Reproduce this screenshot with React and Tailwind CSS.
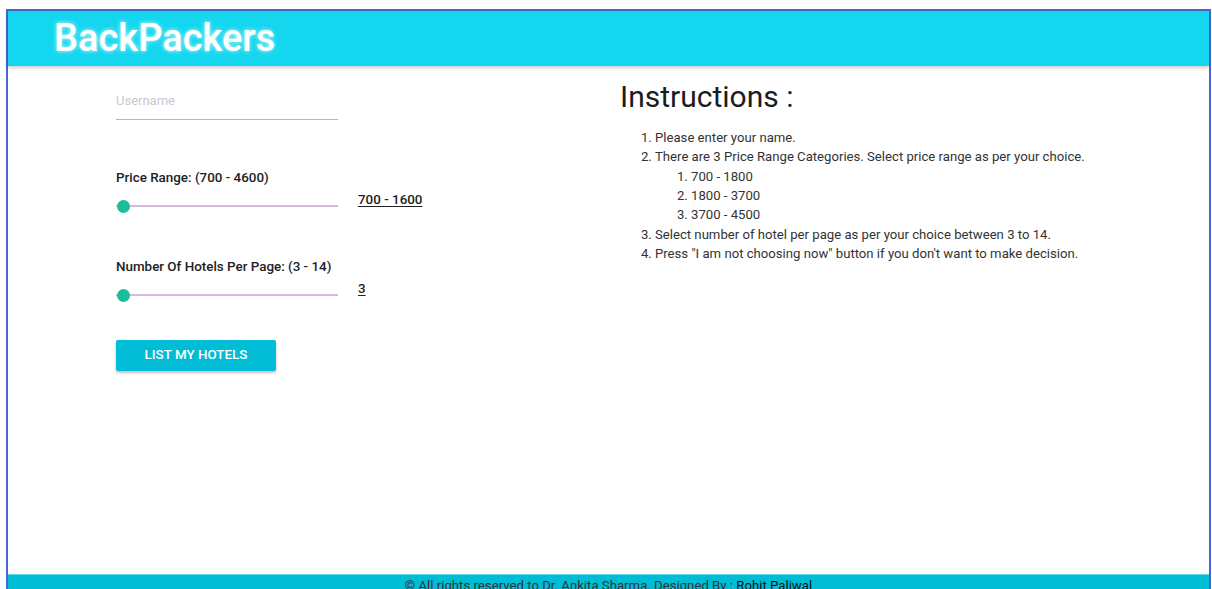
import React, { useState } from 'react';

const PRICE_STEPS = ['700 - 1800', '1800 - 3700', '3700 - 4500'];

function RangeRow({ label, value }) {
  return (
    <div>
      <p className="text-[13.4px] font-medium text-[#222]">{label}</p>
      <div className="mt-[12px] flex items-center">
        <div className="relative h-[12px] w-[222px]">
          <div className="absolute left-0 right-0 top-[5px] h-[2px] bg-[#d5bcd8]" />
          <div className="absolute left-[1px] top-0 h-[13px] w-[13px] rounded-full bg-[#1abc9c]" />
        </div>
        <span className="-mt-[12px] ml-[20px] text-[13.4px] font-medium text-[#222] underline underline-offset-2">
          {value}
        </span>
      </div>
    </div>
  );
}

export default function App() {
  const [name, setName] = useState('');

  return (
    <div className="min-h-screen bg-white pl-[6px] pt-[9px] font-['Roboto',sans-serif]">
      <div className="w-[1205px] border-2 border-[#4568d0]">
        {/* Header */}
        <header className="relative z-10 h-[55px] bg-[#14d7ef] pl-[46px] shadow-[0_2px_4px_rgba(0,0,0,0.2)]">
          <h1 className="pt-[5px] text-[38px] font-medium leading-[44px] text-white [text-shadow:0_0_4px_rgba(255,255,255,0.8)]">
            BackPackers
          </h1>
        </header>

        {/* Body */}
        <main className="grid h-[508px] grid-cols-[600px_1fr]">
          <div className="pl-[108px] pt-[22px]">
            <input
              value={name}
              onChange={(e) => setName(e.target.value)}
              placeholder="Username"
              className="h-[31px] w-[222px] border-b border-[#b7b7b7] pb-[6px] text-[13px] text-[#333] outline-none placeholder:text-[#c9c6d2]"
            />
            <div className="mt-[48px]">
              <RangeRow label="Price Range: (700 - 4600)" value="700 - 1600" />
            </div>
            <div className="mt-[45px]">
              <RangeRow label="Number Of Hotels Per Page: (3 - 14)" value="3" />
            </div>
            <button className="mt-[39px] h-[31px] w-[160px] rounded-[2px] bg-[#00bcd4] text-[13.4px] font-medium text-white shadow-[0_2px_3px_rgba(0,0,0,0.25)]">
              LIST MY HOTELS
            </button>
          </div>

          <div className="pl-[12px] pt-[13px]">
            <h2 className="text-[30px] leading-[36px] text-[#1c1c1c]">Instructions :</h2>
            <ol className="mt-[13px] list-decimal pl-[35px] text-[13.15px] leading-[19.35px] text-[#333]">
              <li>Please enter your name.</li>
              <li>
                There are 3 Price Range Categories. Select price range as per your choice.
                <ol className="list-decimal pl-[36px]">
                  {PRICE_STEPS.map((s) => (
                    <li key={s}>{s}</li>
                  ))}
                </ol>
              </li>
              <li>Select number of hotel per page as per your choice between 3 to 14.</li>
              <li>Press "I am not choosing now" button if you don't want to make decision.</li>
            </ol>
          </div>
        </main>

        {/* Footer */}
        <footer className="h-[30px] border-t border-[#5fd6e6] bg-[#00bcd4] pt-[1px] text-center text-[13.2px] text-[#333]">
          © All rights reserved to Dr. Ankita Sharma. Designed By : <span className="text-[#111]">Rohit Paliwal</span>
        </footer>
      </div>
    </div>
  );
}
